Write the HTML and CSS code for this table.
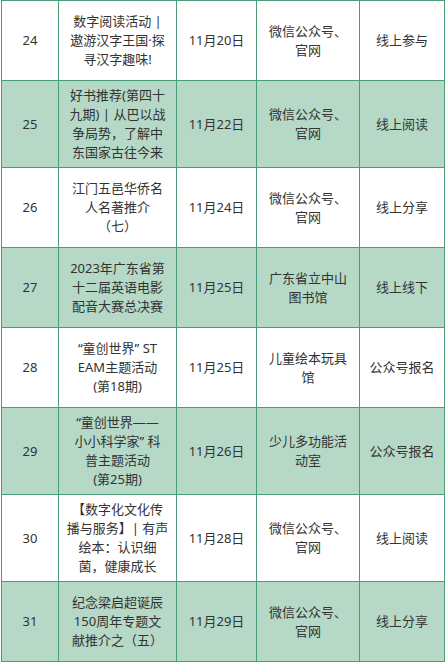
FILE: index.html
```html
<!DOCTYPE html>
<html lang="zh-CN">
<head>
<meta charset="utf-8">
<title>活动安排</title>
<link rel="stylesheet" href="styles.css">
</head>
<body>
<div class="schedule">
  <div class="row">
    <div class="cell">24</div>
    <div class="cell">数字阅读活动 |<br>遨游汉字王国·探<br>寻汉字趣味!</div>
    <div class="cell">11月20日</div>
    <div class="cell">微信公众号、<br>官网</div>
    <div class="cell">线上参与</div>
  </div>
  <div class="row alt">
    <div class="cell">25</div>
    <div class="cell">好书推荐(第四十<br>九期) | 从巴以战<br>争局势，了解中<br>东国家古往今来</div>
    <div class="cell">11月22日</div>
    <div class="cell">微信公众号、<br>官网</div>
    <div class="cell">线上阅读</div>
  </div>
  <div class="row">
    <div class="cell">26</div>
    <div class="cell">江门五邑华侨名<br>人名著推介<br>（七）</div>
    <div class="cell">11月24日</div>
    <div class="cell">微信公众号、<br>官网</div>
    <div class="cell">线上分享</div>
  </div>
  <div class="row alt">
    <div class="cell">27</div>
    <div class="cell">2023年广东省第<br>十二届英语电影<br>配音大赛总决赛</div>
    <div class="cell">11月25日</div>
    <div class="cell">广东省立中山<br>图书馆</div>
    <div class="cell">线上线下</div>
  </div>
  <div class="row">
    <div class="cell">28</div>
    <div class="cell">“童创世界” ST<br>EAM主题活动<br>(第18期)</div>
    <div class="cell">11月25日</div>
    <div class="cell">儿童绘本玩具<br>馆</div>
    <div class="cell">公众号报名</div>
  </div>
  <div class="row alt">
    <div class="cell">29</div>
    <div class="cell">“童创世界——<br>小小科学家” 科<br>普主题活动<br>(第25期)</div>
    <div class="cell">11月26日</div>
    <div class="cell">少儿多功能活<br>动室</div>
    <div class="cell">公众号报名</div>
  </div>
  <div class="row">
    <div class="cell">30</div>
    <div class="cell">【数字化文化传<br>播与服务】| 有声<br>绘本：认识细<br>菌，健康成长</div>
    <div class="cell">11月28日</div>
    <div class="cell">微信公众号、<br>官网</div>
    <div class="cell">线上阅读</div>
  </div>
  <div class="row alt">
    <div class="cell">31</div>
    <div class="cell">纪念梁启超诞辰<br>150周年专题文<br>献推介之（五）</div>
    <div class="cell">11月29日</div>
    <div class="cell">微信公众号、<br>官网</div>
    <div class="cell">线上分享</div>
  </div>
</div>
</body>
</html>
```

FILE: styles.css
```css
html, body {
  background: #ffffff;
}
body {
  margin: 0 0 0 1px;
  font-family: "Noto Sans", "Noto Sans CJK SC", sans-serif;
  font-size: 13px;
  line-height: 19px;
  color: #333333;
}
.schedule {
  display: grid;
  grid-template-columns: 57px 118px 80px 103px 85px;
  width: max-content;
  border-left: 1px solid #4a9d77;
  border-top: 1px solid #4a9d77;
}
.row {
  display: contents;
}
.cell {
  box-sizing: border-box;
  min-height: 80px;
  padding: 5px 2px;
  border-right: 1px solid #4a9d77;
  border-bottom: 1px solid #4a9d77;
  display: flex;
  align-items: center;
  justify-content: center;
  text-align: center;
  white-space: nowrap;
}
.row.alt .cell {
  background: #b5d8c7;
}
```
